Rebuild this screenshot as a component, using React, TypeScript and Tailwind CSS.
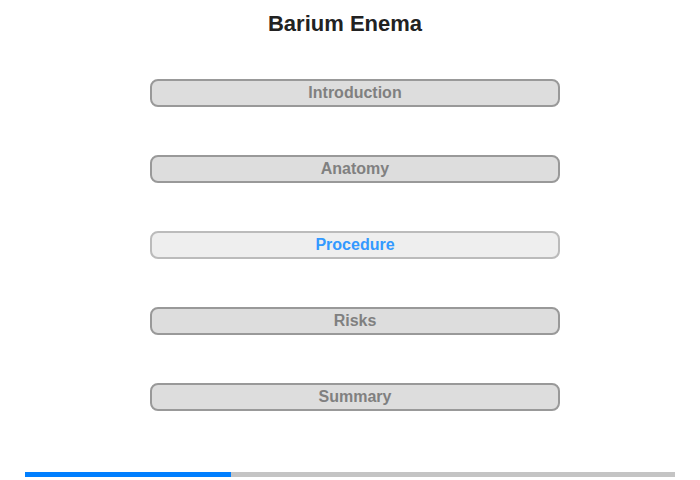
import React from "react";

const items = ["Introduction", "Anatomy", "Procedure", "Risks", "Summary"];

export default function App() {
  return (
    <div
      className="w-[700px] h-[480px] bg-white relative"
      style={{ fontFamily: '"Liberation Sans", Arial, sans-serif' }}
    >
      <div className="w-[690px] pt-[11px] text-center text-[22px] leading-[25px] font-bold text-[#222222]">
        Barium Enema
      </div>
      <div className="mt-[43px] ml-[150px] w-[410px] flex flex-col gap-[48px]">
        {items.map((t) => {
          const active = t === "Procedure";
          return (
            <div
              key={t}
              className={
                active
                  ? "h-[28px] rounded-[8px] border-2 border-[#bbbbbb] bg-[#eeeeee] text-[#3399ff] flex items-center justify-center text-[16px] font-bold"
                  : "h-[28px] rounded-[8px] border-2 border-[#999999] bg-[#dddddd] text-[#808080] flex items-center justify-center text-[16px] font-bold"
              }
            >
              {t}
            </div>
          );
        })}
      </div>
      <div className="absolute left-[25px] top-[472px] w-[650px] h-[5px] bg-[#c4c4c4] flex">
        <div className="w-[206px] h-full bg-[#007fff]" />
      </div>
    </div>
  );
}
